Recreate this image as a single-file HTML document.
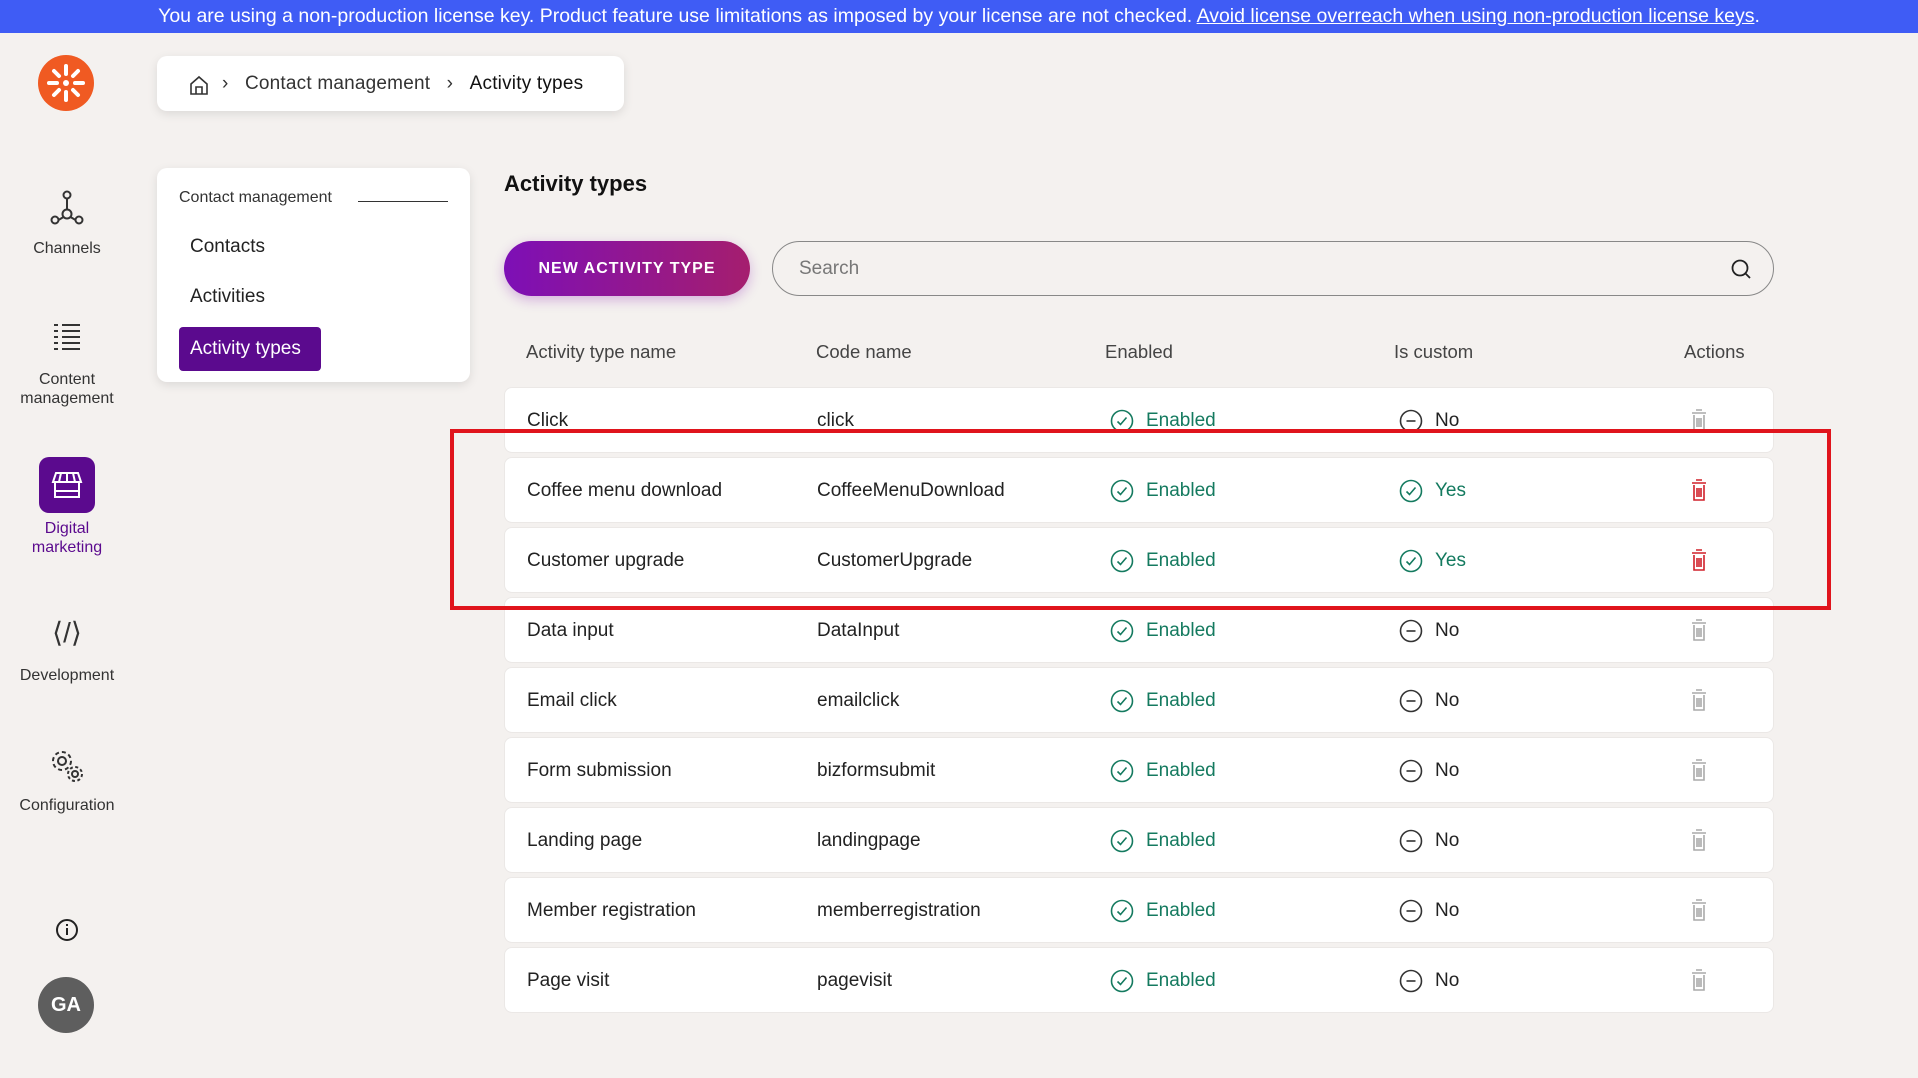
<!DOCTYPE html>
<html><head><meta charset="utf-8"><style>
*{box-sizing:border-box;margin:0;padding:0}
body{width:1918px;height:1078px;background:#f4f1ef;font-family:"Liberation Sans",sans-serif;color:#222;position:relative;overflow:hidden}
.abs{position:absolute}
.banner{left:0;top:0;width:1918px;height:33px;background:#3f5cf5;color:#fff;font-size:19.5px;text-align:center;line-height:33px}
.banner u{text-decoration:underline}
.card{background:#fff;border-radius:10px;box-shadow:0 3px 10px rgba(0,0,0,.1)}
.side{width:134px;text-align:center;font-size:16px;color:#333;left:0}
.row{left:504px;width:1270px;height:66px;background:#fff;border-radius:8px;border:1px solid #ebe8e6;font-size:19px}
.row span{position:absolute;top:22px}
.hdr{font-size:18.5px;color:#444;top:341px}
.ok{color:#147a5f}
.c1{left:22px}.c2{left:312px}.c3{left:601px}.c4{left:890px}
.ic{position:absolute;top:21px}
</style></head><body>
<div class="abs banner">You are using a non-production license key. Product feature use limitations as imposed by your license are not checked. <u>Avoid license overreach when using non-production license keys</u>.</div>

<svg class="abs" style="left:38px;top:55px" width="56" height="56" viewBox="0 0 56 56"><circle cx="28" cy="28" r="28" fill="#f05a22"/><g stroke="#fff" stroke-width="4" stroke-linecap="round"><line x1="28" y1="11" x2="28" y2="19"/><line x1="28" y1="37" x2="28" y2="45"/><line x1="11" y1="28" x2="19" y2="28"/><line x1="37" y1="28" x2="45" y2="28"/><line x1="16" y1="16" x2="21" y2="21"/><line x1="35" y1="35" x2="40" y2="40"/><line x1="40" y1="16" x2="35" y2="21"/><line x1="21" y1="35" x2="16" y2="40"/></g><circle cx="28" cy="28" r="3" fill="#fff"/></svg>

<svg class="abs" style="left:50px;top:190px" width="34" height="36" viewBox="0 0 34 36" fill="none" stroke="#333" stroke-width="2"><circle cx="17" cy="5" r="3.5"/><circle cx="5" cy="30" r="3.5"/><circle cx="29" cy="30" r="3.5"/><circle cx="17" cy="24" r="4.5"/><path d="M17 8.5v11M8.5 30l5-3M25.5 30l-5-3"/></svg>
<div class="abs side" style="top:240px">Channels</div>
<svg class="abs" style="left:50px;top:322px" width="34" height="34" viewBox="0 0 34 34" stroke="#333" stroke-width="2"><path d="M4 3h4M12 3h18M4 9h4M12 9h18M4 15h4M12 15h18M4 21h4M12 21h18M4 27h4M12 27h18"/></svg>
<div class="abs side" style="top:370px;line-height:19px">Content<br>management</div>
<div class="abs" style="left:39px;top:457px;width:56px;height:56px;background:#5b0a8e;border-radius:10px"></div>
<svg class="abs" style="left:51px;top:469px" width="32" height="32" viewBox="0 0 32 32" fill="none" stroke="#fff" stroke-width="2"><path d="M5 4h22l3 9H2z M2 13h28M10 4l-2 9M22 4l2 9M16 4v9M4 13v15h24V13M4 22h24"/></svg>
<div class="abs side" style="top:519px;line-height:19px;color:#5b0a8e">Digital<br>marketing</div>
<div class="abs side" style="top:616px;font-size:28px;color:#333">&lang;/&rang;</div>
<div class="abs side" style="top:667px">Development</div>
<svg class="abs" style="left:49px;top:748px" width="36" height="36" viewBox="0 0 36 36" fill="none" stroke="#333" stroke-width="2"><circle cx="13" cy="13" r="4"/><circle cx="13" cy="13" r="9" stroke-dasharray="4 3"/><circle cx="26" cy="26" r="3"/><circle cx="26" cy="26" r="7" stroke-dasharray="3 2.5"/></svg>
<div class="abs side" style="top:797px">Configuration</div>
<svg class="abs" style="left:55px;top:918px" width="24" height="24" viewBox="0 0 24 24" fill="none" stroke="#222" stroke-width="2"><circle cx="12" cy="12" r="10"/><path d="M12 10v7M12 6v2"/></svg>
<div class="abs" style="left:38px;top:977px;width:56px;height:56px;border-radius:50%;background:#5e5e5e;color:#fff;font-weight:bold;font-size:20px;line-height:56px;text-align:center">GA</div>

<div class="abs card" style="left:157px;top:56px;width:467px;height:55px"></div>
<svg class="abs" style="left:188px;top:74px" width="22" height="22" viewBox="0 0 22 22" fill="none" stroke="#333" stroke-width="1.6"><path d="M3 10L11 3l8 7v10H3z M8 20v-7h6v7"/></svg>
<div class="abs" style="left:222px;top:73px;font-size:19px;color:#333;letter-spacing:.2px">›&nbsp;&nbsp;&nbsp;Contact management&nbsp;&nbsp;&nbsp;›&nbsp;&nbsp;&nbsp;<span style="color:#111">Activity types</span></div>

<div class="abs card" style="left:157px;top:168px;width:313px;height:214px"></div>
<div class="abs" style="left:179px;top:189px;font-size:16px;color:#333">Contact management</div>
<div class="abs" style="left:358px;top:201px;width:90px;height:1px;background:#333"></div>
<div class="abs" style="left:190px;top:236px;font-size:19px">Contacts</div>
<div class="abs" style="left:190px;top:286px;font-size:19px">Activities</div>
<div class="abs" style="left:179px;top:327px;width:142px;height:44px;background:#5b0a8e;border-radius:4px;color:#fff;font-size:19px;line-height:44px;padding-left:11px">Activity types</div>

<div class="abs" style="left:504px;top:171px;font-size:22px;font-weight:bold;color:#111">Activity types</div>
<div class="abs" style="left:504px;top:241px;width:246px;height:55px;border-radius:28px;background:linear-gradient(90deg,#7d0fb6,#a51e6e);color:#fff;font-weight:bold;font-size:16px;letter-spacing:1px;text-align:center;line-height:55px;box-shadow:0 4px 12px rgba(140,30,180,.3)">NEW ACTIVITY TYPE</div>
<div class="abs" style="left:772px;top:241px;width:1002px;height:55px;border-radius:28px;border:1px solid #888;font-size:19px;color:#777;line-height:53px;padding-left:26px">Search</div>
<svg class="abs" style="left:1730px;top:258px" width="22" height="22" viewBox="0 0 22 22" fill="none" stroke="#222" stroke-width="1.8"><circle cx="10" cy="10" r="7.5"/><path d="M15.5 15.5L20 20"/></svg>

<div class="abs hdr" style="left:526px">Activity type name</div>
<div class="abs hdr" style="left:816px">Code name</div>
<div class="abs hdr" style="left:1105px">Enabled</div>
<div class="abs hdr" style="left:1394px">Is custom</div>
<div class="abs hdr" style="left:1684px">Actions</div>

<svg width="0" height="0" style="position:absolute"><defs>
<g id="chk"><circle cx="12" cy="12" r="10.5" fill="none" stroke="#147a5f" stroke-width="1.6"/><path d="M7.5 12.5l3 3 6-7" fill="none" stroke="#147a5f" stroke-width="1.6"/></g>
<g id="no"><circle cx="12" cy="12" r="10.5" fill="none" stroke="#333" stroke-width="1.6"/><path d="M7.5 12h9" stroke="#333" stroke-width="1.6"/></g>
</defs></svg>

<div id="rows"></div>
<script>
var d=[["Click","click",0],["Coffee menu download","CoffeeMenuDownload",1],["Customer upgrade","CustomerUpgrade",1],["Data input","DataInput",0],["Email click","emailclick",0],["Form submission","bizformsubmit",0],["Landing page","landingpage",0],["Member registration","memberregistration",0],["Page visit","pagevisit",0]];
var h="";
d.forEach(function(r,i){var t=387+i*70;var tc=r[2]?"#d0202a":"#aaa";
h+='<div class="abs row" style="top:'+t+'px"><span class="c1">'+r[0]+'</span><span class="c2">'+r[1]+'</span>'+
'<svg class="ic" style="left:605px" width="24" height="24"><use href="#chk"/></svg><span class="ok" style="left:641px">Enabled</span>'+
'<svg class="ic" style="left:894px" width="24" height="24"><use href="#'+(r[2]?'chk':'no')+'"/></svg><span '+(r[2]?'class="ok" ':'')+'style="left:930px">'+(r[2]?'Yes':'No')+'</span>'+
'<svg class="ic" style="left:1186px;top:20px" width="16" height="24" viewBox="0 0 16 24" fill="none" stroke="'+tc+'" stroke-width="1.6"><path d="M5 2h6M1 5h14M3 7v15h10V7M6 10v9M8 10v9M10 10v9"/></svg></div>';});
document.getElementById("rows").innerHTML=h;
</script>
<div class="abs" style="left:450px;top:429px;width:1381px;height:181px;border:4px solid #e0141c"></div>
</body></html>
